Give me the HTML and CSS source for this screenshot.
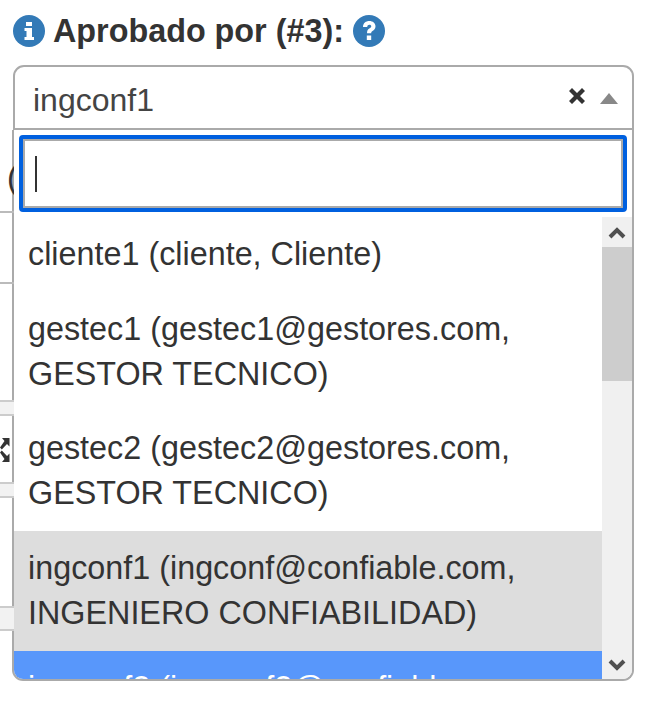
FILE: index.html
```html
<!DOCTYPE html>
<html lang="es">
<head>
<meta charset="utf-8">
<title>Aprobado por</title>
<link rel="stylesheet" href="styles.css">
</head>
<body>
<div class="backdrop" aria-hidden="true">
  <span class="paren">(</span>
  <span class="rule rule-a"></span>
  <span class="rule rule-b"></span>
  <span class="cell cell-a"></span>
  <span class="cell cell-b"></span>
  <span class="cell cell-c"></span>
  <svg class="expand" viewBox="0 0 10 24"><path d="M2 0H9.500V8.500L7 6 1.800 11.500 0 9.500 4.500 3zM2 24H9.500V15.500L7 18 1.800 12.500 0 14.500 4.500 21z" fill="#333"/></svg>
</div>
<main class="field">
  <div class="label-row">
    <svg class="badge" viewBox="0 0 32 32"><circle cx="16" cy="16" r="16" fill="#337ab7"/><path d="M13 7h6v4h-6zM11.500 13h7.500v9h2v3H11.500v-3h2v-6h-2z" fill="#fff"/></svg>
    <label class="label">Aprobado por (#3):</label>
    <svg class="badge" viewBox="0 0 32 32"><circle cx="16" cy="16" r="16" fill="#337ab7"/><path d="M10 12c0-4 3-6 6.300-6 3.500 0 6.200 2.200 6.200 5.300 0 2.500-1.500 3.700-3 4.700-1 .7-1.300 1.100-1.300 2.300h-4.200c0-2.500.7-3.700 2.300-4.800 1.200-.8 2-1.300 2-2.200 0-.9-.8-1.500-1.900-1.500-1.300 0-2 .8-2.200 2.200zM13.800 20.500h4.400V25h-4.400z" fill="#fff"/></svg>
  </div>
  <div class="select">
    <div class="selection">
      <span class="value">ingconf1</span>
      <svg class="clear" viewBox="0 0 16 16"><path d="M0 3l3-3 5 5 5-5 3 3-5 5 5 5-3 3-5-5-5 5-3-3 5-5z" fill="#333"/></svg>
      <span class="arrow"></span>
    </div>
    <div class="dropdown">
      <div class="search"><span class="caret"></span></div>
      <div class="results">
        <ul class="options">
          <li class="option">cliente1 (cliente, Cliente)</li>
          <li class="option">gestec1 (gestec1@gestores.com, GESTOR TECNICO)</li>
          <li class="option">gestec2 (gestec2@gestores.com, GESTOR TECNICO)</li>
          <li class="option selected">ingconf1 (ingconf@confiable.com, INGENIERO CONFIABILIDAD)</li>
          <li class="option active">ingconf2 (ingconf2@confiable.com, INGENIERO CONFIABILIDAD)</li>
        </ul>
        <div class="scrollbar">
          <svg class="chev" viewBox="0 0 30 30"><path d="M8 20l7-7 7 7" fill="none" stroke="#505050" stroke-width="4"/></svg>
          <div class="track"><div class="thumb"></div></div>
          <svg class="chev" viewBox="0 0 30 30"><path d="M8 10l7 7 7-7" fill="none" stroke="#505050" stroke-width="4"/></svg>
        </div>
      </div>
    </div>
  </div>
</main>
</body>
</html>
```
FILE: styles.css
```css
* { box-sizing: border-box; }
html, body { margin: 0; height: 705px; overflow: hidden; background: #fff; }
body { font-family: "Liberation Sans", Arial, sans-serif; color: #333; font-size: 32.35px; position: relative; }

.backdrop { position: absolute; left: 0; top: 0; width: 14px; height: 705px; overflow: hidden; }
.paren { position: absolute; left: 7px; top: 160px; line-height: 36px; }
.rule { position: absolute; left: 0; width: 14px; height: 2px; background: #bbb; }
.rule-a { top: 211px; }
.rule-b { top: 282px; }
.cell { position: absolute; left: 0; width: 14px; background: #f2f2f2; border-top: 2px solid #ccc; border-bottom: 2px solid #ccc; }
.cell-a { top: 400px; height: 16px; }
.cell-b { top: 482px; height: 16px; }
.cell-c { top: 606px; height: 25px; }
.expand { position: absolute; left: 0; top: 438px; width: 10px; height: 24px; }

.field { padding: 15px 13px 0; width: 647px; }
.label-row { display: flex; align-items: center; height: 32px; gap: 9px; }
.badge { width: 32px; height: 32px; flex: none; }
.label { font-weight: 700; font-size: 32.35px; line-height: 32px; margin-left: -1px; }

.select { margin-top: 18px; width: 621px; height: 616px; }
.selection { height: 65px; border: 2px solid #aaa; border-radius: 11px 11px 0 0; display: flex; align-items: center; padding-left: 18px; background: #fff; }
.value { flex: 1; color: #444; font-size: 32px; line-height: 66px; padding-top: 4px; }
.clear { width: 16px; height: 16px; margin: -3px 15px 0 0; flex: none; }
.arrow { width: 0; height: 0; border-left: 9px solid transparent; border-right: 9px solid transparent; border-bottom: 11px solid #888; margin-right: 14px; margin-top: 1px; }

.dropdown { margin-left: -1px; height: 551px; border: 2px solid #aaa; border-top: 0; border-radius: 0 0 11px 11px; overflow: hidden; background: #fff; padding-top: 5px; }
.search { margin: 0 5px; height: 77px; border: 4px solid #0060df; border-radius: 4px; box-shadow: inset 0 0 0 2px #aaa; display: flex; align-items: center; padding-left: 12px; }
.caret { width: 2px; height: 36px; background: #333; }
.results { display: flex; height: 464px; margin-top: 5px; }
.options { flex: 1; min-width: 0; list-style: none; margin: 0; padding: 0; overflow: hidden; }
.option { padding: 15px 14px; line-height: 44.8px; }
.selected { background: #ddd; }
.active { background: #5897fb; color: #fff; }
.scrollbar { width: 30px; flex: none; background: #f0f0f0; display: flex; flex-direction: column; }
.chev { width: 30px; height: 30px; flex: none; }
.track { flex: 1; }
.thumb { height: 134px; background: #cdcdcd; }
```
